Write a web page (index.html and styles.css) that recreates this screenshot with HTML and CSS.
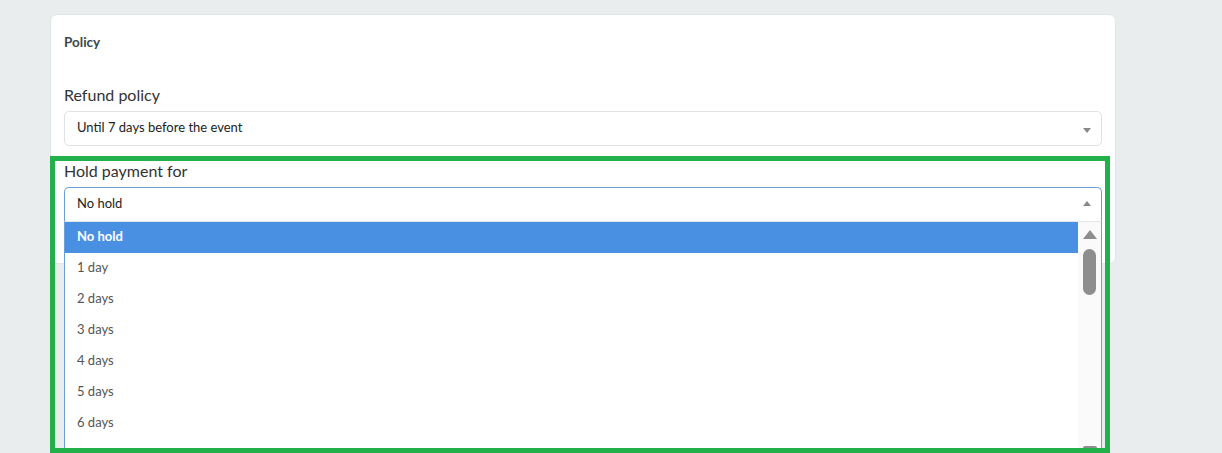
FILE: index.html
```html
<!DOCTYPE html>
<html lang="en">
<head>
<meta charset="utf-8">
<title>Policy</title>
<link rel="stylesheet" href="styles.css">
</head>
<body>
<div class="page">
  <section class="card">
    <h2 class="card-title">Policy</h2>
    <div class="field">
      <label class="field-label">Refund policy</label>
      <div class="select">
        <span class="select-value">Until 7 days before the event</span>
        <span class="caret caret-down"></span>
      </div>
    </div>
    <div class="field field-hold">
      <label class="field-label">Hold payment for</label>
      <div class="select-wrap">
        <div class="select select-open">
          <span class="select-value">No hold</span>
          <span class="caret caret-up"></span>
        </div>
        <div class="dropdown">
          <ul class="options">
            <li class="option option-active">No hold</li>
            <li class="option">1 day</li>
            <li class="option">2 days</li>
            <li class="option">3 days</li>
            <li class="option">4 days</li>
            <li class="option">5 days</li>
            <li class="option">6 days</li>
          </ul>
          <div class="scrollbar">
            <span class="sb-up"></span>
            <span class="sb-thumb"></span>
            <span class="sb-down"></span>
          </div>
        </div>
      </div>
    </div>
  </section>
  <div class="highlight"></div>
</div>
</body>
</html>
```

FILE: styles.css
```css
* { box-sizing: border-box; }
html, body {
  margin: 0;
  padding: 0;
  background: #e9edee;
  font-family: Lato, "Open Sans", Arial, sans-serif;
  height: 453px;
  overflow: hidden;
}
.page {
  position: relative;
  padding: 14px 0 0 50px;
}
.card {
  width: 1066px;
  height: 250px;
  background: #fff;
  border: 1px solid #e1e5e7;
  border-radius: 7px;
  padding: 20px 13px 0 13px;
}
.card-title {
  margin: 0;
  font-size: 13.5px;
  line-height: 14px;
  font-weight: 700;
  color: #3b464d;
}
.field { margin-top: 36px; }
.field-hold { margin-top: 15px; }
.field-label {
  display: block;
  font-size: 16px;
  line-height: 20px;
  color: #333;
  margin-bottom: 6px;
}
.select {
  position: relative;
  height: 35px;
  border: 1px solid #dfe2e5;
  border-radius: 5px;
  background: #fff;
  display: flex;
  align-items: center;
  padding: 0 12px 3px;
  font-size: 13px;
  color: #222;
}
.select-wrap { position: relative; }
.select-open {
  height: 35px;
  border-color: #6a9fd8;
  border-radius: 5px 5px 0 0;
  border-bottom-color: #e3e6e9;
}
.caret {
  position: absolute;
  right: 10px;
  top: 50%;
  width: 0;
  height: 0;
  border-left: 4px solid transparent;
  border-right: 4px solid transparent;
}
.caret-down {
  border-top: 5px solid #888;
  margin-top: -1px;
}
.caret-up {
  border-bottom: 5px solid #888;
  margin-top: -4px;
}
.dropdown {
  position: absolute;
  left: 0;
  right: 0;
  top: 35px;
  height: 250px;
  background: #fff;
  border: 1px solid #6a9fd8;
  border-top: none;
  display: flex;
  z-index: 2;
}
.options {
  list-style: none;
  margin: 0;
  padding: 0;
  flex: 1;
}
.option {
  height: 31px;
  line-height: 29px;
  padding-left: 12px;
  font-size: 13px;
  color: #555;
}
.option-active {
  background: #4a90e2;
  color: #fff;
  font-weight: 700;
}
.scrollbar {
  width: 23px;
  background: #fafafa;
  position: relative;
  display: flex;
  flex-direction: column;
  align-items: center;
  padding-top: 8px;
}
.sb-up {
  width: 0;
  height: 0;
  border-left: 7px solid transparent;
  border-right: 7px solid transparent;
  border-bottom: 9px solid #8e8e8e;
}
.sb-thumb {
  margin-top: 10px;
  width: 13px;
  height: 46px;
  border-radius: 7px;
  background: #8e8e8e;
}
.sb-down {
  position: absolute;
  top: 224px;
  width: 14px;
  height: 4px;
  border-radius: 2px 2px 0 0;
  background: #8e8e8e;
}
.highlight {
  position: absolute;
  left: 50px;
  top: 156px;
  width: 1060px;
  height: 297px;
  border: 5px solid #22b04b;
  z-index: 3;
  pointer-events: none;
}
```
